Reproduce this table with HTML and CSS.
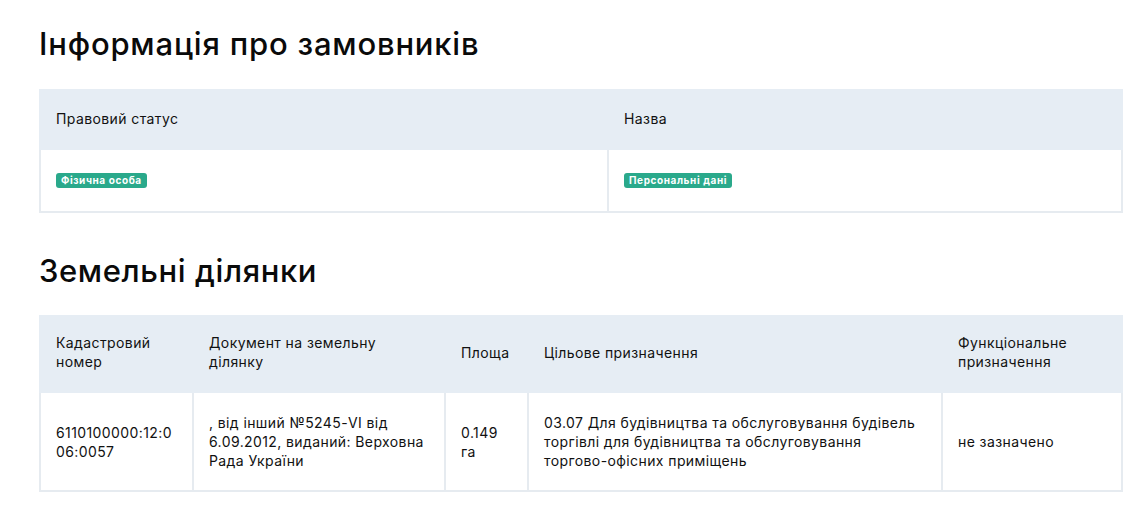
FILE: index.html
```html
<!DOCTYPE html>
<html lang="uk">
<head>
<meta charset="utf-8">
<link rel="stylesheet" href="styles.css">
</head>
<body>
<main class="page">
  <h2 class="title title-first">Інформація про замовників</h2>
  <table class="grid grid-customers">
    <colgroup><col class="c-status"><col class="c-name"></colgroup>
    <thead>
      <tr><th>Правовий статус</th><th>Назва</th></tr>
    </thead>
    <tbody>
      <tr>
        <td class="badge-cell"><span class="badge">Фізична особа</span></td>
        <td class="badge-cell"><span class="badge">Персональні дані</span></td>
      </tr>
    </tbody>
  </table>

  <h2 class="title title-second">Земельні ділянки</h2>
  <table class="grid grid-land">
    <colgroup>
      <col class="c-cad"><col class="c-doc"><col class="c-area"><col class="c-purpose"><col class="c-func">
    </colgroup>
    <thead>
      <tr>
        <th>Кадастровий номер</th>
        <th>Документ на земельну ділянку</th>
        <th>Площа</th>
        <th>Цільове призначення</th>
        <th>Функціональне призначення</th>
      </tr>
    </thead>
    <tbody>
      <tr>
        <td>6110100000:12:0<br>06:0057</td>
        <td>, від інший №5245-VI від 6.09.2012, виданий: Верховна Рада України</td>
        <td>0.149<br>га</td>
        <td>03.07 Для будівництва та обслуговування будівель торгівлі для будівництва та обслуговування <span class="nowrap">торгово-офісних</span> приміщень</td>
        <td>не зазначено</td>
      </tr>
    </tbody>
  </table>
</main>
</body>
</html>
```

FILE: styles.css
```css
html, body {
  margin: 0;
  padding: 0;
  background: #ffffff;
}

body {
  font-family: Inter, "Liberation Sans", Arial, sans-serif;
  color: #111111;
}

.page {
  padding: 0 0 0 39px;
  width: 1082px;
}

.title {
  margin: 0;
  font-weight: 500;
  font-size: 31px;
  line-height: 36px;
  letter-spacing: 0.8px;
  color: #0a0a0a;
}

.title-first {
  padding-top: 26px;
  margin-bottom: 27px;
}

.title-second {
  margin-top: 40px;
  margin-bottom: 26px;
  letter-spacing: 0.6px;
}

.grid {
  width: 1082px;
  border-collapse: collapse;
  table-layout: fixed;
  font-size: 14px;
  line-height: 19px;
  letter-spacing: 0.4px;
}

.grid th {
  background: #e6edf4;
  font-weight: 400;
  text-align: left;
  vertical-align: middle;
  padding: 18px 16px 20px 15px;
  border: 2px solid #e6edf4;
  color: #111111;
}

.grid td {
  border: 2px solid #e6ebf0;
  padding: 19px 16px 19px 15px;
  vertical-align: middle;
  color: #111111;
}

.nowrap {
  white-space: nowrap;
}

.grid-customers .c-status { width: 568px; }
.grid-customers .c-name { width: 514px; }

.grid-customers td.badge-cell {
  padding-top: 19px;
  padding-bottom: 23px;
}

.badge {
  display: inline-block;
  background: #2aa98b;
  color: #ffffff;
  font-weight: 700;
  font-size: 10px;
  line-height: 15px;
  letter-spacing: 0.6px;
  padding: 0 5px;
  border-radius: 3px;
  vertical-align: middle;
}

.grid-land th {
  padding-top: 16px;
  padding-bottom: 20px;
}

.grid-land td {
  padding-top: 20px;
  padding-bottom: 20px;
}

.grid-land .c-cad { width: 153px; }
.grid-land .c-doc { width: 252px; }
.grid-land .c-area { width: 83px; }
.grid-land .c-purpose { width: 414px; }
.grid-land .c-func { width: 180px; }
```
